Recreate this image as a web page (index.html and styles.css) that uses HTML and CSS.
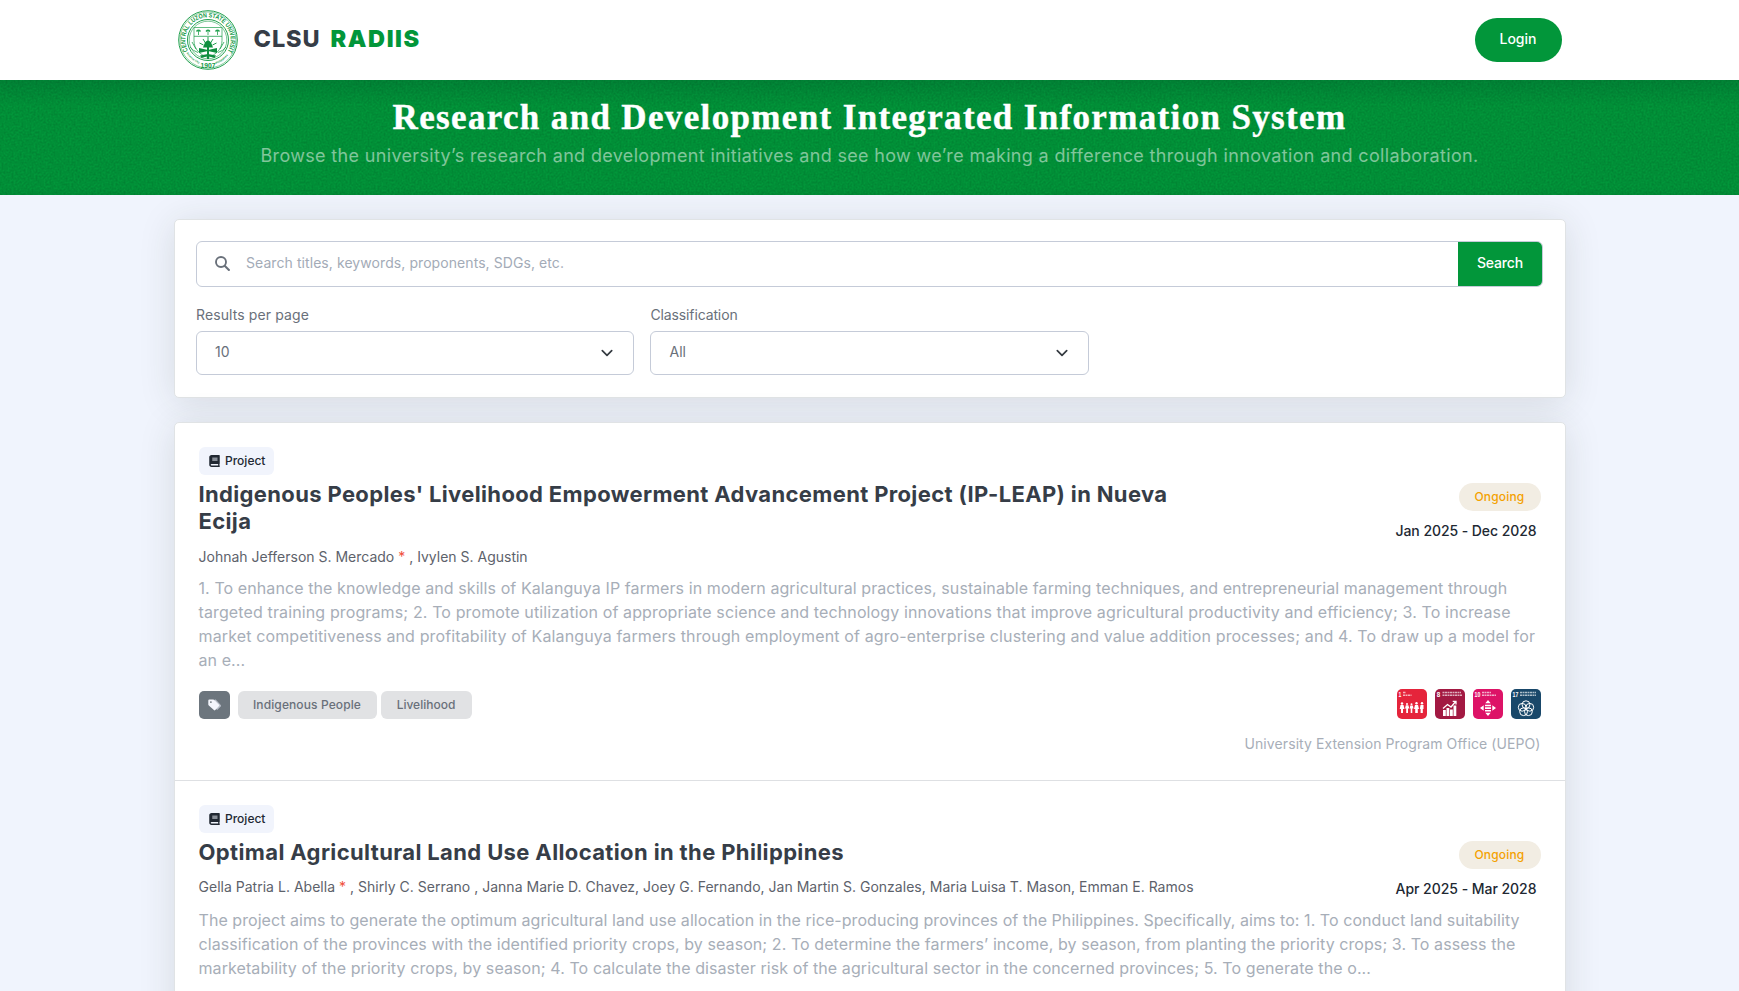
FILE: index.html
```
<!DOCTYPE html>
<html lang="en">
<head>
<meta charset="utf-8">
<title>CLSU RADIIS</title>
<link rel="stylesheet" href="styles.css">
</head>
<body>
<svg class="defs" width="0" height="0" aria-hidden="true">
  <symbol id="book" viewBox="0 0 448 512"><path fill="currentColor" fill-rule="evenodd" d="M448 336V24c0-13-11-24-24-24H96C43 0 0 43 0 96v320c0 53 43 96 96 96h328c13 0 24-11 24-24v-16c0-8-3-14-9-19-4-15-4-59 0-74 6-4 9-11 9-19zM128 112h224v40H128zm0 80h224v40H128zM381 448H96c-43 0-43-64 0-64h285c-2 17-2 47 0 64z"/></symbol>
  <symbol id="chev" viewBox="0 0 16 16"><path d="M3.300 5.700l4.700 4.700 4.700-4.700" fill="none" stroke="#343a40" stroke-width="1.700" stroke-linecap="round" stroke-linejoin="round"/></symbol>
</svg>

<header class="nav">
  <div class="wrap nav-row">
    <div class="brand">
      <svg class="seal" viewBox="0 0 60 60" fill="none" stroke="#21a04e">
        <defs>
          <path id="arc-top" d="M10 40.800A22.700 22.700 0 1 1 50 40.800"/>
          <path id="arc-small-l" d="M8.500 43Q13.500 50.500 22 54"/>
          <path id="arc-small-r" d="M38 54Q46.500 50.500 51.500 43"/>
        </defs>
        <circle cx="30" cy="30" r="29.300" stroke-width="1"/>
        <circle cx="30" cy="30" r="28" stroke-width=".5"/>
        <circle cx="30" cy="30" r="20.500" stroke-width="1"/>
        <circle cx="30" cy="30" r="18.800" stroke-width=".6"/>
        <g class="seal-text" stroke="none" fill="#0f9843">
          <text font-size="6.500"><textPath href="#arc-top" textLength="98" lengthAdjust="spacingAndGlyphs">CENTRAL LUZON STATE UNIVERSITY</textPath></text>
          <text x="30" y="57.500" font-size="7.500" text-anchor="middle" textLength="15" lengthAdjust="spacingAndGlyphs">1907</text>
          <text font-size="2.800"><textPath href="#arc-small-l">Science City</textPath></text>
          <text font-size="2.800"><textPath href="#arc-small-r">Philippines</textPath></text>
        </g>
        <path d="M16 17.500h28v13c0 9-6 14-14 17-8-3-14-8-14-17z" stroke-width=".7"/>
        <path d="M16 26.300h28M20.500 25v-4M30 25v-4M39.500 25v-4" stroke-width=".8"/>
        <path d="M18.500 21.500q2-2.500 4 0M28 21.500q2-2.500 4 0M37.500 21.500q2-2.500 4 0" stroke-width="1.300"/>
        <path d="M30 27v5M25 29l2.500 4M35 29l-2.500 4M21.500 33l4 2M38.500 33l-4 2" stroke-width="1"/>
        <path d="M27 32.500q3-4 6 0l2 5h-10z" fill="#0f8f3f" stroke="none"/>
        <path d="M21 38l9 2 9-2v5l-9-2-9 2zM22 45.500l8-1.500 8 1.500-1.500 2.500L30 46l-6.500 2zM29 37h2v12h-2z" fill="#0f8f3f" stroke="none"/>
        <path d="M12 37q3 4 8 5.500M48 37q-3 4-8 5.500M14 32l4 7M46 32l-4 7" stroke-width=".8"/>
      </svg>
      <span class="brand-name"><span class="clsu">CLSU</span><span class="radiis">RADIIS</span></span>
    </div>
    <a class="login">Login</a>
  </div>
</header>

<section class="hero">
  <svg class="grain" aria-hidden="true"><filter id="noise"><feTurbulence type="fractalNoise" baseFrequency=".5" numOctaves="2" seed="4"/><feColorMatrix values="0 0 0 0 0  0 0 0 0 0  0 0 0 0 0  1.200 0 0 0 -.35"/></filter><rect width="100%" height="100%" filter="url(#noise)"/></svg>
  <h1>Research and Development Integrated Information System</h1>
  <p>Browse the university’s research and development initiatives and see how we’re making a difference through innovation and collaboration.</p>
</section>

<main class="wrap">
  <section class="card filters">
    <div class="search">
      <svg class="mag" viewBox="0 0 15 15" fill="none" stroke="#69707a"><circle cx="6" cy="6" r="5" stroke-width="1.900"/><path d="M9.900 9.900l4 4" stroke-width="2.100" stroke-linecap="round"/></svg>
      <span class="placeholder">Search titles, keywords, proponents, SDGs, etc.</span>
      <span class="search-btn">Search</span>
    </div>
    <div class="selects">
      <div class="field"><label class="lab-a">Results per page</label><div class="select"><span>10</span><svg><use href="#chev"/></svg></div></div>
      <div class="field"><label class="lab-b">Classification</label><div class="select"><span>All</span><svg><use href="#chev"/></svg></div></div>
    </div>
  </section>

  <section class="card results">
    <article class="item">
      <span class="kind"><svg><use href="#book"/></svg>Project</span>
      <div class="head">
        <div class="info">
          <h2>Indigenous Peoples' Livelihood Empowerment Advancement Project (IP-LEAP) in Nueva<br>Ecija</h2>
          <p class="authors">Johnah Jefferson S. Mercado <i>*</i> , Ivylen S. Agustin</p>
        </div>
        <div class="side"><span class="status">Ongoing</span><span class="date date-a">Jan 2025 - Dec 2028</span></div>
      </div>
      <p class="desc">
        <span class="t2">1. To enhance the knowledge and skills of Kalanguya IP farmers in modern agricultural practices, sustainable farming techniques, and entrepreneurial management through</span>
        <span class="t3">targeted training programs; 2. To promote utilization of appropriate science and technology innovations that improve agricultural productivity and efficiency; 3. To increase</span>
        <span class="t3">market competitiveness and profitability of Kalanguya farmers through employment of agro-enterprise clustering and value addition processes; and 4. To draw up a model for</span>
        <span class="t2">an e...</span>
      </p>
      <div class="foot">
        <div class="tags">
          <span class="tag-icon"><svg viewBox="0 0 13 12"><path fill="#b9bfca" d="M6.500.8l1.200-.2 5 5.300q.6.8 0 1.500L9.200 11l-.9-.7z"/><path fill="#f3f5fc" d="M.3 1.500Q.3.500 1.300.500h4q.6 0 1 .4l4.700 4.900q.6.700 0 1.300l-3.700 4q-.7.6-1.400 0L.8 6.400q-.5-.5-.5-1z"/><circle cx="2.900" cy="3.100" r=".9" fill="#6c757d"/></svg></span>
          <span class="tag tag-a">Indigenous People</span>
          <span class="tag tag-b">Livelihood</span>
        </div>
        <div class="sdgs">
          <svg class="sdg" viewBox="0 0 30 30"><rect width="30" height="30" fill="#e5243b"/><text x="1.500" y="8" class="num" textLength="2.800" lengthAdjust="spacingAndGlyphs">1</text><path class="micro" d="M6 3.500h3M6 6.300h8.500"/><g fill="#fff"><circle cx="5" cy="14.500" r="1.200"/><circle cx="10" cy="15" r="1"/><circle cx="14.500" cy="15.300" r="1"/><circle cx="19.500" cy="14.300" r="1.200"/><circle cx="25" cy="14.300" r="1.200"/><path d="M3.500 16h3l1 4h-1.500v4H4v-4H2.700zM8.800 16.300h2.600l.9 3.200H11V24H9.200v-4.500H8zM13.300 16.600h2.500l.7 3H15.300V24h-1.600v-4.400H12.700zM18 16h3l1 4h-1.200v4h-2.600v-4H17zM23.500 16h3v4h-.7v4h-2.200v-4h-.8z"/></g></svg>
          <svg class="sdg" viewBox="0 0 30 30"><rect width="30" height="30" fill="#a21942"/><text x="1.800" y="8" class="num" textLength="3.500" lengthAdjust="spacingAndGlyphs">8</text><path class="micro" d="M7.500 3.500h18.500M7.500 6.300h20"/><g fill="#fff"><path d="M8 21h2.800v6H8zM11.500 19h2.800v8h-2.800zM15 20.500h2.800V27H15zM18.500 16.500h2.800V27h-2.800z"/></g><path d="M8 19.500l4.500-4 3.500 2.500 4.700-5.500M17.700 12.300h3.300v3.300" fill="none" stroke="#fff" stroke-width="1.300"/></svg>
          <svg class="sdg" viewBox="0 0 30 30"><rect width="30" height="30" fill="#dd1367"/><text x="1.500" y="8" class="num" textLength="5.800" lengthAdjust="spacingAndGlyphs">10</text><path class="micro" d="M9 3.500h9M9 6.300h14"/><path fill="#fff" d="M15 11l2.700 3.200h-5.400zM15 27l2.700-3.200h-5.400zM7 19l3.700-2.800v5.600zM23 19l-3.700-2.800v5.600zM12 15.700h6v1.600h-6zM12 18.300h6v1.600h-6zM12 20.900h6v1.600h-6z"/></svg>
          <svg class="sdg" viewBox="0 0 30 30"><rect width="30" height="30" fill="#19486a"/><text x="1.500" y="8" class="num" textLength="5.800" lengthAdjust="spacingAndGlyphs">17</text><path class="micro" d="M9 3.500h16M9 6.300h16"/><g fill="none" stroke="#fff" stroke-width="1"><circle cx="15" cy="15.700" r="3.900"/><circle cx="18.800" cy="18.300" r="3.900"/><circle cx="17.400" cy="22.700" r="3.900"/><circle cx="12.600" cy="22.700" r="3.900"/><circle cx="11.200" cy="18.300" r="3.900"/></g></svg>
        </div>
      </div>
      <p class="office">University Extension Program Office (UEPO)</p>
    </article>

    <article class="item">
      <span class="kind"><svg><use href="#book"/></svg>Project</span>
      <div class="head">
        <div class="info">
          <h2 class="h-b">Optimal Agricultural Land Use Allocation in the Philippines</h2>
          <p class="authors authors-b">Gella Patria L. Abella <i>*</i> , Shirly C. Serrano , Janna Marie D. Chavez, Joey G. Fernando, Jan Martin S. Gonzales, Maria Luisa T. Mason, Emman E. Ramos</p>
        </div>
        <div class="side"><span class="status">Ongoing</span><span class="date">Apr 2025 - Mar 2028</span></div>
      </div>
      <p class="desc">
        <span class="t1">The project aims to generate the optimum agricultural land use allocation in the rice-producing provinces of the Philippines. Specifically, aims to: 1. To conduct land suitability</span>
        <span class="t1b">classification of the provinces with the identified priority crops, by season; 2. To determine the farmers’ income, by season, from planting the priority crops; 3. To assess the</span>
        <span class="t2">marketability of the priority crops, by season; 4. To calculate the disaster risk of the agricultural sector in the concerned provinces; 5. To generate the o...</span>
      </p>
    </article>
  </section>
</main>
</body>
</html>
```
FILE: styles.css
```
* { box-sizing: border-box; }
html, body { height: 991px; overflow: hidden; }
body { margin: 0; background: #f0f4fd; font-family: Inter, "Open Sans", sans-serif; color: #212832; }
h1, h2, p { margin: 0; }
.defs { display: block; width: 0; height: 0; }
.wrap { width: 1392px; margin: 0 auto; }

.nav { height: 80px; background: #fff; }
.nav-row { height: 80px; padding: 0 4px; display: flex; align-items: center; justify-content: space-between; }
.brand { display: flex; align-items: center; gap: 16px; }
.seal { width: 60px; height: 60px; }
.seal-text { font-family: "Liberation Sans", Arial, sans-serif; font-weight: 700; }
.brand-name { display: flex; gap: 10px; font-size: 23.500px; line-height: 30px; padding-bottom: 3px; }
.clsu { font-weight: 800; color: #363d47; letter-spacing: .9px; }
.radiis { font-weight: 900; color: #02963a; letter-spacing: 1.600px; }
.login { width: 87px; height: 44px; border-radius: 22px; background: #02963a; color: #fff; font-weight: 500; font-size: 14px; line-height: 42px; text-align: center; }

.hero { position: relative; height: 115px; padding-top: 17px; text-align: center; background: linear-gradient(#028637, #02963a 26px, #02963a 108px, #028f38); color: #fff; }
.grain { position: absolute; inset: 0; width: 100%; height: 100%; opacity: .2; }
.hero h1 { position: relative; font: 700 35px/42px "Liberation Serif", serif; letter-spacing: 1.350px; -webkit-text-stroke: .4px #fff; white-space: nowrap; }
.hero p { position: relative; margin-top: 3px; font-size: 18px; line-height: 27px; letter-spacing: .338px; color: rgba(255,255,255,.5); white-space: nowrap; }

.card { background: #fff; border: 1px solid #e0e3e5; border-radius: 5px; box-shadow: 0 4px 36px rgba(50,55,35,.13); }
.filters { margin-top: 24px; height: 179px; padding: 21px 21px 0; }
.search { width: 1347.500px; height: 46px; border: 1px solid #c5cbd8; border-radius: 6px; display: flex; align-items: center; overflow: hidden; padding-left: 18px; }
.mag { width: 15px; height: 15px; flex: none; margin-bottom: 1px; }
.placeholder { flex: 1; padding: 0 0 2px 16.500px; font-size: 14px; letter-spacing: .073px; color: #a3abb7; line-height: 20px; }
.search-btn { width: 84px; height: 44px; background: #02963a; color: #fff; font-size: 14px; font-weight: 500; letter-spacing: -.15px; line-height: 42px; text-align: center; }
.selects { display: flex; gap: 16px; margin-top: 18px; }
.field { width: 438.500px; }
.field label { display: block; padding-left: .5px; font-size: 14px; line-height: 20px; height: 26px; color: #69707a; }
.lab-a { letter-spacing: .109px; }
.lab-b { letter-spacing: -.13px; }
.select { height: 44px; border: 1px solid #c5cbd8; border-radius: 6px; padding: 0 18px 2px 18.500px; display: flex; align-items: center; justify-content: space-between; font-size: 14px; line-height: 20px; color: #69707a; }
.select svg { width: 16px; height: 16px; margin-top: 1px; }

.results { margin-top: 24px; }
.item { height: 358px; padding: 24px; border-bottom: 1px solid #dee0e3; }
.kind { width: 75px; height: 28px; border-radius: 6px; background: #f1f4fc; display: flex; align-items: center; gap: 5.500px; padding: 0 0 2px 10px; font-size: 12px; font-weight: 500; color: #212832; }
.kind svg { width: 11px; height: 12px; margin-top: 1px; }
.head { display: flex; justify-content: space-between; }
.info { width: 1000px; padding-top: 6px; }
h2 { font-size: 22px; line-height: 27px; font-weight: 700; letter-spacing: .349px; color: #363d47; white-space: nowrap; }
.h-b { letter-spacing: .37px; }
.authors { margin-top: 12px; font-size: 14px; line-height: 20px; color: #5d626b; white-space: nowrap; }
.authors-b { margin-top: 11px; letter-spacing: .015px; }
.authors i { font-style: normal; color: #f0503c; }
.side { padding-top: 8px; display: flex; flex-direction: column; align-items: flex-end; }
.status { width: 82px; height: 28px; border-radius: 14px; background: #f2ede3; color: #f4a100; font-size: 12px; font-weight: 500; letter-spacing: .17px; line-height: 27px; text-align: center; }
.date { margin: 10px 4px 0 0; font-size: 14px; line-height: 20px; font-weight: 500; letter-spacing: -.031px; color: #212832; }
.date-a { letter-spacing: -.068px; }
.desc { margin-top: 9px; font-size: 16px; line-height: 24px; color: #a7aeb8; white-space: nowrap; }
.desc span { display: block; }
.t1 { letter-spacing: .057px; }
.desc .t1b { letter-spacing: .073px; }
.t2 { letter-spacing: .087px; }
.t3 { letter-spacing: .126px; }
.foot { display: flex; justify-content: space-between; align-items: flex-end; margin-top: 17px; }
.tags { display: flex; align-items: center; }
.tag-icon { width: 31px; height: 28px; border-radius: 5px; background: #6c757d; display: flex; align-items: center; justify-content: center; margin-right: 8px; }
.tag-icon svg { width: 13px; height: 12px; margin-bottom: 1px; }
.tag { height: 28px; border-radius: 6px; background: #e1e2e4; color: #69707a; font-size: 12px; font-weight: 500; line-height: 27px; text-align: center; }
.tag-a { width: 139px; margin-right: 4px; letter-spacing: .108px; }
.tag-b { width: 91px; }
.sdgs { display: flex; gap: 8px; }
.sdg { width: 30px; height: 30px; border-radius: 5px; display: block; }
.num { font: 700 7px "Liberation Sans", sans-serif; fill: #fff; }
.micro { stroke: rgba(255,255,255,.65); stroke-width: 1.600; stroke-dasharray: 2 .5; }
.office { margin-top: 15px; text-align: right; font-size: 14px; line-height: 20px; letter-spacing: .092px; color: #a7aeb8; }
```
